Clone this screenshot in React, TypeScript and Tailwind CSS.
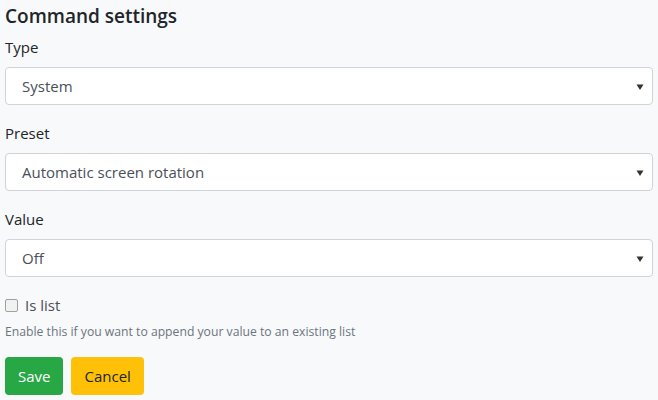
import React from 'react';

const font = { fontFamily: '"Open Sans", "Noto Sans", sans-serif' };

function SelectBox({ value }: { value: string }) {
  return (
    <div className="relative flex h-[38px] items-center rounded-[4px] border border-[#ced4da] bg-white pl-[16px] text-[15px] text-[#495057]">
      <span>{value}</span>
      <svg className="absolute right-[8px] top-[15px] h-[8px] w-[8px]" viewBox="0 0 8 8" aria-hidden>
        <path d="M0.5 1.5h7L4 7z" fill="#333" />
      </svg>
    </div>
  );
}

function Field({ label, value }: { label: string; value: string }) {
  return (
    <div className="flex flex-col">
      <div className="flex h-[22px] items-center text-[15px] text-[#212529]">{label}</div>
      <div className="mt-[9px]">
        <SelectBox value={value} />
      </div>
    </div>
  );
}

export default function App() {
  return (
    <div className="h-[400px] w-[658px] bg-[#f8f9fa] px-[5px]" style={font}>
      <div className="flex h-[32px] items-center text-[19px] font-semibold text-[#212529]">Command settings</div>
      <div className="mt-[4px] flex flex-col gap-[17px]">
        <Field label="Type" value="System" />
        <Field label="Preset" value="Automatic screen rotation" />
        <Field label="Value" value="Off" />
      </div>
      <div className="mt-[18px] flex h-[20px] items-center gap-[7px] text-[15px] text-[#495057]">
        <span className="h-[13px] w-[13px] rounded-[2px] border border-[#a0a0a0] bg-[#f1f1f1]" />
        <span>Is list</span>
      </div>
      <div className="mt-[7px] text-[12.2px] leading-[20px] text-[#6c757d]">
        Enable this if you want to append your value to an existing list
      </div>
      <div className="mt-[15px] flex gap-[8px] text-[15px]">
        <button className="h-[38px] rounded-[4px] bg-[#28a745] px-[13px] text-white">Save</button>
        <button className="h-[38px] rounded-[4px] bg-[#ffc107] px-[13px] text-[#212529]">Cancel</button>
      </div>
    </div>
  );
}
